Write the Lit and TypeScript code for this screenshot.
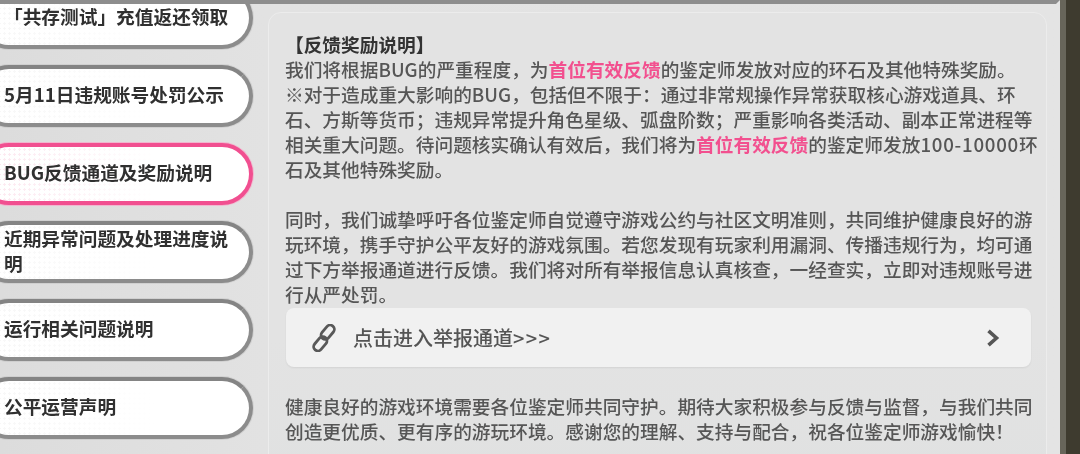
import { LitElement, html, css } from "lit";
import { customElement } from "lit/decorators.js";

const ITEMS = [
  "「共存测试」充值返还领取",
  "5月11日违规账号处罚公示",
  "BUG反馈通道及奖励说明",
  "近期异常问题及处理进度说明",
  "运行相关问题说明",
  "公平运营声明",
];

@customElement("app-root")
export class AppRoot extends LitElement {
  static styles = css`
    :host {
      display: flex;
      width: 1080px;
      height: 454px;
      overflow: hidden;
      background: #3e3b2f;
      font-family: "Noto Sans CJK SC", "Liberation Sans", sans-serif;
      font-size: 18.7px;
      line-height: 25px;
    }
    .panel {
      width: 1060px;
      height: 454px;
      flex: none;
      display: flex;
      flex-direction: column;
      background: linear-gradient(90deg, #dcdcdc 0%, #e2e2e2 25%, #e4e4e4 100%);
      position: relative;
      filter: blur(0.35px);
    }
    .edge {
      width: 6px;
      flex: none;
      background: #67655a;
    }
    .topbar {
      height: 4px;
      flex: none;
      background: #8d8d8d;
      clip-path: polygon(0 0, 100% 0, calc(100% - 4px) 100%, 0 100%);
      position: relative;
      z-index: 1;
    }
    .body {
      flex: 1;
      min-height: 0;
      display: flex;
      overflow: hidden;
    }
    .side {
      width: 268px;
      flex: none;
      overflow: hidden;
    }
    .list {
      display: flex;
      flex-direction: column;
      gap: 16px;
      margin: -17px 0 0 -22px;
    }
    .pill {
      box-sizing: border-box;
      width: 275px;
      height: 62px;
      flex: none;
      display: flex;
      align-items: center;
      padding: 0 18px 5px 22px;
      border: 4px solid #8c8c8c;
      border-top-color: #848484;
      border-radius: 31px;
      color: #303030;
      font-weight: 600;
      background:
        linear-gradient(90deg, rgba(255,255,255,.5) 0%, #fff 65%),
        radial-gradient(circle, #eeeeee 1px, transparent 1.2px) 0 0 / 5px 5px,
        #fff;
      box-shadow: 0 0 0 1px rgba(190,190,190,.45);
    }
    .pill.active {
      border-color: #f14f90;
      box-shadow: 0 0 0 1px rgba(245,170,200,.75);
      background:
        linear-gradient(90deg, rgba(255,255,255,.3) 0%, #fff 65%),
        radial-gradient(circle, #fbdce8 1px, transparent 1.2px) 0 0 / 5px 5px,
        #fff;
    }
    .card {
      box-sizing: border-box;
      width: 779px;
      height: 470px;
      flex: none;
      margin-top: 8px;
      padding: 18px 0 0 16px;
      background: linear-gradient(180deg, #e3e3e3 0%, #e3e3e3 70%, #e0e1e1 100%);
      border: 1px solid #ececec;
      border-radius: 13px;
      color: #565656;
      font-weight: 500;
    }
    .text {
      width: 755px;
      margin: 0;
    }
    .title {
      color: #333;
      font-weight: 600;
    }
    em {
      font-style: normal;
      color: #f2508f;
      font-weight: 600;
    }
    .num {
      letter-spacing: 0.75px;
    }
    .gap {
      height: 25px;
    }
    .link {
      box-sizing: border-box;
      width: 745px;
      height: 59px;
      margin: 2px 0 0 1px;
      display: flex;
      align-items: center;
      padding: 0 31px 0 26px;
      background: #f1f1f1;
      border-radius: 8px;
      box-shadow: 0 1px 2px rgba(0,0,0,.07);
      font-size: 20px;
      color: #555;
    }
    .link .label {
      flex: 1;
      margin-left: 17px;
    }
    .arrows {
      letter-spacing: 1.4px;
    }
    .link svg {
      flex: none;
      display: block;
    }
    .last {
      margin-top: 26px;
    }
  `;

  render() {
    return html`
      <div class="panel">
        <div class="topbar"></div>
        <div class="body">
          <div class="side">
            <div class="list">
              ${ITEMS.map(
                (t, i) => html`<div class="pill ${i === 2 ? "active" : ""}"><span>${t}</span></div>`
              )}
            </div>
          </div>
          <div class="card">
            <p class="text">
              <span class="title">【反馈奖励说明】</span><br />
              我们将根据BUG的严重程度，为<em>首位有效反馈</em>的鉴定师发放对应的环石及其他特殊奖励。<br />
              ※对于造成重大影响的BUG，包括但不限于：通过非常规操作异常获取核心游戏道具、环石、方斯等货币；违规异常提升角色星级、弧盘阶数；严重影响各类活动、副本正常进程等相关重大问题。待问题核实确认有效后，我们将为<em>首位有效反馈</em>的鉴定师发放<span class="num">100-10000</span>环石及其他特殊奖励。
            </p>
            <div class="gap"></div>
            <p class="text">
              同时，我们诚挚呼吁各位鉴定师自觉遵守游戏公约与社区文明准则，共同维护健康良好的游玩环境，携手守护公平友好的游戏氛围。若您发现有玩家利用漏洞、传播违规行为，均可通过下方举报通道进行反馈。我们将对所有举报信息认真核查，一经查实，立即对违规账号进行从严处罚。
            </p>
            <div class="link">
              <svg width="24" height="28" viewBox="0 0 24 28" fill="none" stroke="#585858" stroke-width="2.8">
                <rect x="11.5" y="0.2" width="8.4" height="16" rx="4.2" transform="rotate(40 15.7 8.2)" />
                <rect x="4.1" y="11.8" width="8.4" height="16" rx="4.2" transform="rotate(40 8.3 19.8)" />
              </svg>
              <span class="label">点击进入举报通道<span class="arrows">&gt;&gt;&gt;</span></span>
              <svg width="14" height="18" viewBox="0 0 14 18" fill="none" stroke="#565656" stroke-width="3.6">
                <path d="M2.5 1.8 L10.5 9 L2.5 16.2" />
              </svg>
            </div>
            <p class="text last">
              健康良好的游戏环境需要各位鉴定师共同守护。期待大家积极参与反馈与监督，与我们共同创造更优质、更有序的游玩环境。感谢您的理解、支持与配合，祝各位鉴定师游戏愉快！
            </p>
          </div>
        </div>
      </div>
      <div class="edge"></div>
    `;
  }
}
